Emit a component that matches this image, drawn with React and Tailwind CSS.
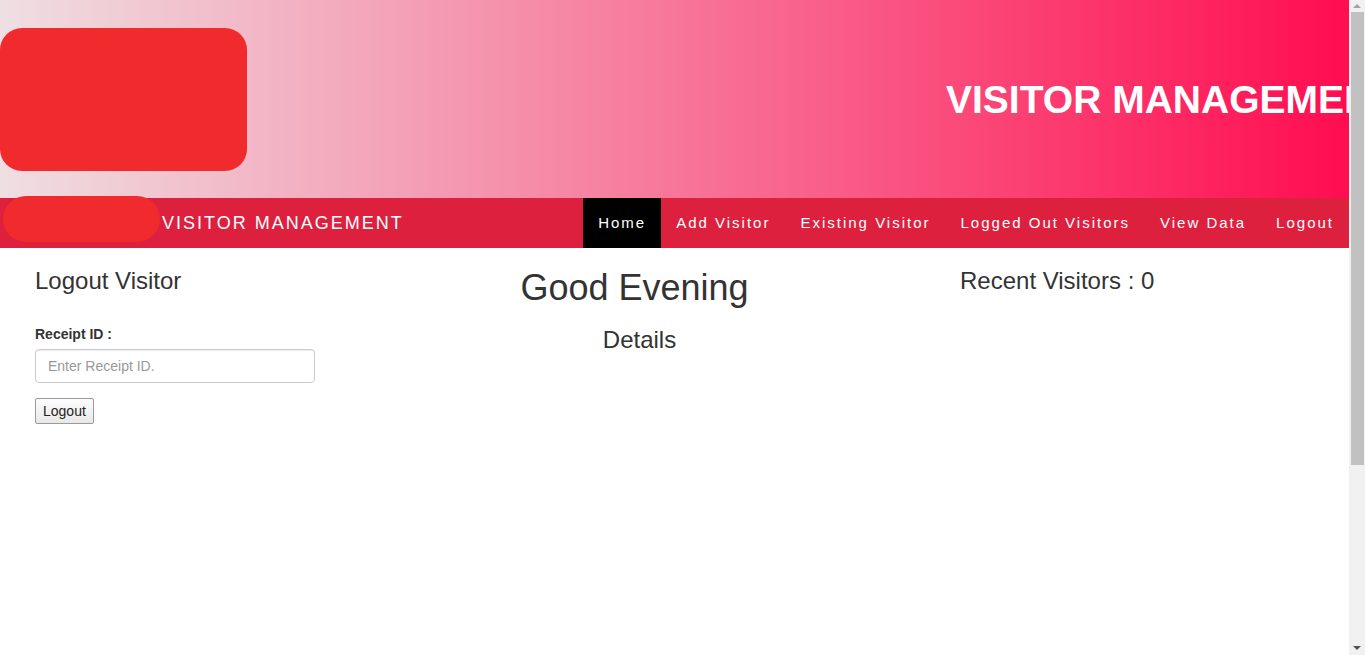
import React from "react";

const links = ["Home", "Add Visitor", "Existing Visitor", "Logged Out Visitors", "View Data", "Logout"];

const Scrollbar = () => (
  <div className="flex w-[16px] shrink-0 flex-col items-center bg-[#f1f1f1]">
    <div className="mt-[4px] h-0 w-0 border-x-[4px] border-b-[4px] border-x-transparent border-b-[#a3a3a3]" />
    <div className="mt-[4px] h-[453px] w-[13px] bg-[#c1c1c1]" />
    <div className="mt-auto mb-[5px] h-0 w-0 border-x-[4px] border-t-[4px] border-x-transparent border-t-[#505050]" />
  </div>
);

const App = () => {
  return (
    <div className="flex h-[655px] overflow-hidden bg-white font-['Liberation_Sans',Arial,sans-serif] text-[#333]">
      <div className="flex min-w-0 flex-1 flex-col">
        <header className="flex h-[198px] shrink-0 items-center overflow-hidden bg-[linear-gradient(to_right,#efdfe2,#ff0d50)]">
          <div className="h-[143px] w-[247px] shrink-0 rounded-[22px] bg-[#f12a2e]" />
          <h1 className="ml-[699px] whitespace-nowrap text-[39px] font-bold leading-none text-white">
            VISITOR MANAGEMENT
          </h1>
        </header>

        <nav className="flex h-[50px] shrink-0 items-center bg-[#dc203e]">
          <div className="ml-[3px] -mt-[9px] h-[46px] w-[157px] shrink-0 rounded-[24px] bg-[#f12a2e]" />
          <span className="ml-[2px] text-[18px] tracking-[2px] text-white">VISITOR MANAGEMENT</span>
          <ul className="ml-auto flex h-full">
            {links.map((l, i) => (
              <li
                key={l}
                className={
                  "flex h-full items-center px-[15px] text-[15px] tracking-[2px] text-white " +
                  (i === 0 ? "bg-black" : "")
                }
              >
                {l}
              </li>
            ))}
          </ul>
        </nav>

        <main className="grid grid-cols-[310px_615px_1fr] pl-[20px]">
          <section className="px-[15px]">
            <h3 className="mt-[20px] text-[24px] leading-[26.4px]">Logout Visitor</h3>
            <label className="mt-[30px] block text-[14px] font-bold leading-[20px]">Receipt ID :</label>
            <input
              className="mt-[5px] block h-[34px] w-[280px] rounded-[4px] border border-[#ccc] px-[12px] text-[14px] shadow-[inset_0_1px_1px_rgba(0,0,0,0.075)] placeholder:text-[#999]"
              placeholder="Enter Receipt ID."
            />
            <button className="mt-[15px] h-[26px] rounded-[2px] border border-[#9a9a9a] bg-[linear-gradient(#fdfdfd,#e8e8e8)] px-[7px] text-[14px] text-[#222]">
              Logout
            </button>
          </section>

          <section className="pl-[15px] pr-[21px] text-center">
            <h1 className="mt-[20px] text-[36px] leading-[39.6px]">Good Evening</h1>
            <h3 className="mt-[19px] pl-[10px] text-[24px] leading-[26.4px]">Details</h3>
          </section>

          <section className="px-[15px]">
            <h3 className="mt-[20px] text-[24px] leading-[26.4px]">Recent Visitors : 0</h3>
          </section>
        </main>
      </div>
      <Scrollbar />
    </div>
  );
};

export default App;
